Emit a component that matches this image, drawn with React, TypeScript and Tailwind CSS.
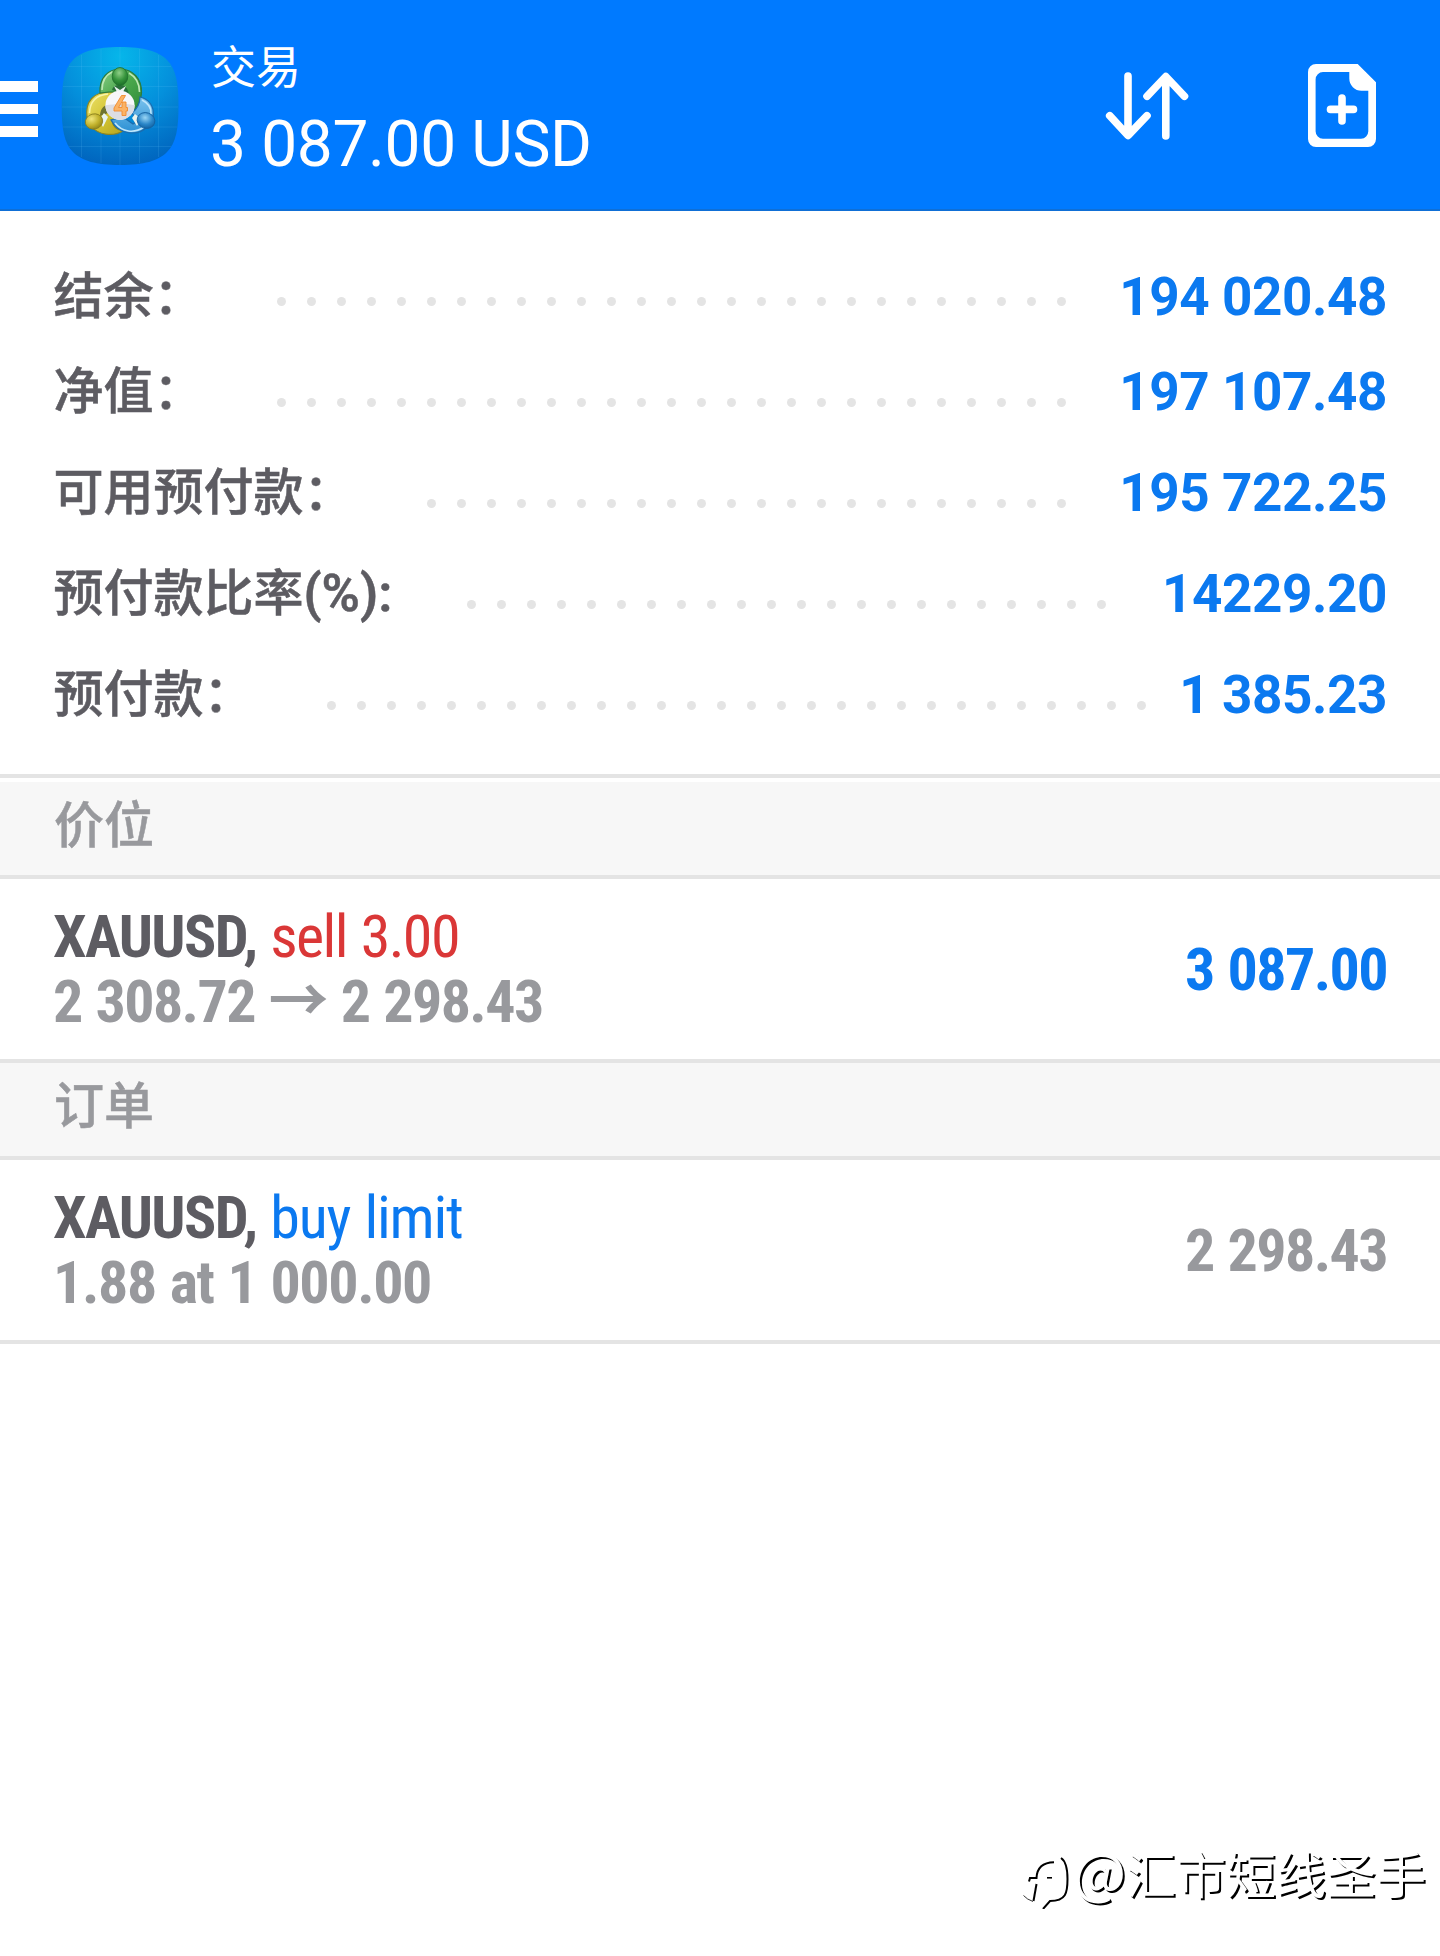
type Balance = {
  label: string;
  suffix?: string;
  labelClass: string;
  dots: number;
  value: string;
  rowClass: string;
  dotsClass: string;
};

const balances: Balance[] = [
  { label: '结余：', labelClass: 'w-[223.5px]', dots: 27, value: '194 020.48', rowClass: 'h-[95px]', dotsClass: 'pt-[30px]' },
  { label: '净值：', labelClass: 'w-[223.5px]', dots: 27, value: '197 107.48', rowClass: 'h-[101px]', dotsClass: 'pt-9' },
  { label: '可用预付款：', labelClass: 'w-[373.5px]', dots: 22, value: '195 722.25', rowClass: 'h-[101px]', dotsClass: 'pt-9' },
  { label: '预付款比率', suffix: '(%):', labelClass: 'w-[413.5px]', dots: 22, value: '14229.20', rowClass: 'h-[101px]', dotsClass: 'pt-9' },
  { label: '预付款：', labelClass: 'w-[273.5px]', dots: 28, value: '1 385.23', rowClass: 'h-[101px]', dotsClass: 'pt-9' },
];

const AppLogo = () => (
  <svg width="118" height="118" viewBox="0 0 118 118">
    <defs>
      <radialGradient id="tile" cx="0.5" cy="0.08" r="0.95">
        <stop offset="0" stopColor="#06b6ea" />
        <stop offset="0.5" stopColor="#0490dc" />
        <stop offset="1" stopColor="#0063bd" />
      </radialGradient>
      <linearGradient id="green" x1="0" y1="0" x2="1" y2="1">
        <stop offset="0" stopColor="#8fd08c" />
        <stop offset="0.5" stopColor="#4aa84c" />
        <stop offset="1" stopColor="#2f8c3a" />
      </linearGradient>
      <linearGradient id="yellow" x1="0" y1="0" x2="1" y2="1">
        <stop offset="0" stopColor="#eee36a" />
        <stop offset="0.6" stopColor="#cfc02f" />
        <stop offset="1" stopColor="#b3a420" />
      </linearGradient>
      <linearGradient id="blue" x1="0" y1="0" x2="0" y2="1">
        <stop offset="0" stopColor="#7cc4ee" />
        <stop offset="1" stopColor="#2b8fd3" />
      </linearGradient>
      <radialGradient id="greenHead" cx="0.45" cy="0.3" r="0.7">
        <stop offset="0" stopColor="#8fcf87" />
        <stop offset="0.6" stopColor="#36943c" />
        <stop offset="1" stopColor="#1d7029" />
      </radialGradient>
      <radialGradient id="yellowHead" cx="0.4" cy="0.3" r="0.7">
        <stop offset="0" stopColor="#f0e67c" />
        <stop offset="0.6" stopColor="#c2b22c" />
        <stop offset="1" stopColor="#94871a" />
      </radialGradient>
      <radialGradient id="blueHead" cx="0.4" cy="0.35" r="0.7">
        <stop offset="0" stopColor="#9ad6f5" />
        <stop offset="0.6" stopColor="#2a86c8" />
        <stop offset="1" stopColor="#12609f" />
      </radialGradient>
    </defs>
    <path
      d="M59 0C83 0 97 4 106 13C115 22 117.5 36 117.5 59C117.5 82 115 96 106 105C97 114 83 118 59 118C35 118 21 114 12 105C3 96 0.7 82 0.7 59C0.7 36 3 22 12 13C21 4 35 0 59 0Z"
      fill="url(#tile)"
    />
    <path
      d="M20.5 8V110M40 2V116M59 0V118M78.5 2V116M97.5 8V110M8 19.5H110M2 39.5H116M1 60H117M2 80H116M8 99.5H110"
      stroke="#6fd0ff"
      strokeOpacity="0.14"
      fill="none"
    />
    {/* yellow figure */}
    <path
      d="M26 70C24 54 33 45 48 45L60 45V70L51 74C52 80 56 83 62 84C52 90 37 88 30 79Z"
      fill="url(#yellow)"
      stroke="#8a8322"
      strokeWidth="1.2"
    />
    <path d="M28.5 66C29 54 36 48 47 47" stroke="#f8f3a8" strokeWidth="1.6" fill="none" />
    <path d="M39 69C39 63 42 59 47 57L47 66Z" fill="#6f7430" />
    {/* green figure */}
    <path
      d="M39 46C38 31 47 22 59 22C72 22 81 32 80.5 46C80 53 77 58 74 62L62 56L58 45H48Z"
      fill="url(#green)"
      stroke="#2c7a3d"
      strokeWidth="1.2"
    />
    <path d="M41 43C41 34 45 28 51 25M68 26C75 30 78.5 36 78.5 45" stroke="#bfe8b5" strokeWidth="1.6" fill="none" />
    <path d="M51 43C52 39 55 38 59 38C64 38 67 41 68 48L60 46Z" fill="#2a6f3a" />
    {/* blue figure */}
    <path
      d="M79 50C88 52 94 60 92 70L87 79C77 90 58 88 50 73L62 70L72 77L77 74L71 66C76 62 79 57 79 50Z"
      fill="url(#blue)"
      stroke="#1b6cae"
      strokeWidth="1.2"
    />
    <path d="M54 76C61 85 73 87 83 80M81 53C87 56 90.5 61 90 67" stroke="#bfe6fb" strokeWidth="1.6" fill="none" />
    <path d="M53 39L59 43L65 39L62 45H56ZM43 66L38 73L42 80L47 70ZM74 67L80 72L76 79L71 71Z" fill="#e9f4ef" />
    <ellipse cx="59" cy="29.5" rx="7.8" ry="9" fill="url(#greenHead)" stroke="#1f6f2c" strokeWidth="0.8" />
    <ellipse cx="33" cy="74.5" rx="8.8" ry="7.6" transform="rotate(-15 33 74.5)" fill="url(#yellowHead)" stroke="#877c1c" strokeWidth="0.8" />
    <ellipse cx="85" cy="73.5" rx="9" ry="7.8" transform="rotate(20 85 73.5)" fill="url(#blueHead)" stroke="#15609d" strokeWidth="0.8" />
    <circle cx="59" cy="58.3" r="14.6" fill="#f7f7fa" />
    <path d="M44.4 58.3A14.6 14.6 0 0 0 73.6 58.3C66 56 52 57 44.4 58.3Z" fill="#dcdde3" />
    <path
      d="M60.5 48.5L53 61V64H61V68.5H65V64H66.5V60.5H65V55H61V60.5H57.5L64.5 48.5Z"
      fill="#fbb365"
      stroke="#f08a2c"
      strokeWidth="0.9"
    />
  </svg>
);

const SortIcon = () => (
  <svg width="84" height="68" viewBox="0 0 84 68" fill="none" stroke="#fff" strokeWidth="7.6" strokeLinecap="round" strokeLinejoin="round">
    <path d="M23 4V63M4.7 43.7L23 63.5L42 43.7M60.8 64V5M42 24.3L60.8 4.5L79.5 24.3" />
  </svg>
);

const NewOrderIcon = () => (
  <svg width="68" height="83" viewBox="0 0 68 83">
    <path
      fill="#fff"
      fillRule="evenodd"
      d="M8 0H49.7L68 18.3V75A8 8 0 0 1 60 83H8A8 8 0 0 1 0 75V8A8 8 0 0 1 8 0ZM15 8A7.4 7.4 0 0 0 7.6 15.4V67.3A7.4 7.4 0 0 0 15 74.7H53A7.4 7.4 0 0 0 60.3 67.3V26.7H53.5A12.2 12.2 0 0 1 41.3 14.5V8Z"
    />
    <path d="M34 34V57M22.5 45.4H45.5" stroke="#fff" strokeWidth="7.6" strokeLinecap="round" />
  </svg>
);

const Watermark = () => (
  <div className="absolute right-[14px] bottom-12 flex items-end">
    <svg className="-mb-px" width="50" height="60" viewBox="0 0 50 60" fill="none" stroke="#000" strokeWidth="2">
      <path d="M6 32.5L7 29H13.5C14 19 19 13.5 31 13.3" />
      <path d="M24 28.8H29" strokeWidth="1.6" />
      <path d="M13.5 35L10.5 52" />
      <path d="M0.5 46.5Q4 50.5 10 52.5" strokeWidth="0.8" />
      <path d="M38 9C44 13 44.5 22 44.5 30C44.5 44 43 52 27 52L20 60" />
    </svg>
    <span className="text-[50px] leading-[72px] text-white [font-family:'Noto_Sans_CJK_SC',sans-serif] [text-shadow:2px_2px_0_#000]">
      <span className="inline-block w-[53px] text-[56px] leading-none">@</span>汇市短线圣手
    </span>
  </div>
);

const SectionTitle = ({ children }: { children: string }) => (
  <div className="h-[97px] border-b-4 border-[#e4e4e4] bg-[#f7f7f7] pl-[54px] text-[50px] leading-[88px] font-medium text-[#98999d] [-webkit-text-stroke:0.5px]">
    {children}
  </div>
);

export default function App() {
  return (
    <div className="relative h-[1956px] w-[1440px] overflow-hidden bg-white [font-family:Roboto,'Noto_Sans_CJK_SC',sans-serif]">
      <header className="flex h-[211px] items-start border-b-2 border-[#0f6fd6] bg-[#007aff] text-white">
        <div className="mt-[81px] flex w-[38px] flex-col gap-3">
          <div className="h-[10.5px] bg-white" />
          <div className="h-[10.5px] bg-white" />
          <div className="h-[10.5px] bg-white" />
        </div>
        <div className="mt-[47px] ml-[23px]">
          <AppLogo />
        </div>
        <div className="mt-[41px] ml-8">
          <div className="text-[45px] leading-[56px]">交易</div>
          <div className="-ml-px mt-3 text-[64px] leading-[72px] tracking-[-0.35px]">3 087.00 USD</div>
        </div>
        <div className="mt-[72px] ml-auto">
          <SortIcon />
        </div>
        <div className="mt-[64px] mr-16 ml-[119px]">
          <NewOrderIcon />
        </div>
      </header>

      <section className="h-[563px] pt-14 pr-[53px] pl-[53.5px]">
        {balances.map((b) => (
          <div key={b.label} className={`flex items-start leading-[60px] font-medium ${b.rowClass}`}>
            <span className={`shrink-0 text-[50px] whitespace-nowrap text-[#5d5c62] [-webkit-text-stroke:0.5px] ${b.labelClass}`}>
              {b.label}
              {b.suffix && <span className="text-[52px] font-semibold">{b.suffix}</span>}
            </span>
            <div className={`flex gap-[21px] ${b.dotsClass}`}>
              {Array.from({ length: b.dots }, (_, i) => (
                <div key={i} className="size-[9px] rounded-full bg-[#e4e4e4]" />
              ))}
            </div>
            <span className="ml-auto text-[53px] font-bold tracking-[-0.4px] text-[#0b79f0]">{b.value}</span>
          </div>
        ))}
      </section>

      <div className="border-t-4 border-[#e4e4e4] pt-1">
        <SectionTitle>价位</SectionTitle>
      </div>
      <div className="flex h-[184px] items-center justify-between border-b-4 border-[#e4e4e4] px-[53px] text-[60px] leading-[65px] font-bold tracking-[-1.6px] [word-spacing:1.5px] [font-family:'Roboto_Condensed','Noto_Sans_CJK_SC',sans-serif]">
        <div>
          <div className="text-[#5d5c62]">
            XAUUSD, <span className="font-normal text-[#da3737]">sell 3.00</span>
          </div>
          <div className="text-[#98999d]">
            2 308.72 → 2 298.43
          </div>
        </div>
        <div className="text-[#0b79f0]">3 087.00</div>
      </div>

      <SectionTitle>订单</SectionTitle>
      <div className="flex h-[184px] items-center justify-between border-b-4 border-[#e4e4e4] px-[53px] text-[60px] leading-[65px] font-bold tracking-[-1.6px] [word-spacing:1.5px] [font-family:'Roboto_Condensed','Noto_Sans_CJK_SC',sans-serif]">
        <div>
          <div className="text-[#5d5c62]">
            XAUUSD, <span className="font-normal tracking-[-1.2px] text-[#0b79f0]">buy limit</span>
          </div>
          <div className="tracking-[-1.4px] text-[#98999d]">1.88 at 1 000.00</div>
        </div>
        <div className="text-[#98999d]">2 298.43</div>
      </div>

      <Watermark />
    </div>
  );
}
